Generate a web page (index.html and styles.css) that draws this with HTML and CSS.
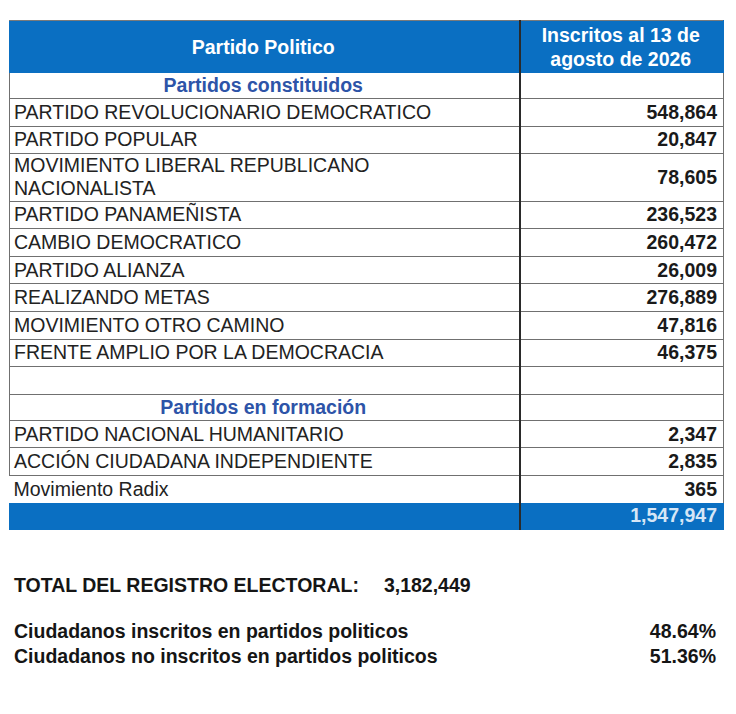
FILE: index.html
```html
<!DOCTYPE html>
<html lang="es">
<head>
<meta charset="utf-8">
<title>Inscritos en partidos políticos</title>
<link rel="stylesheet" href="styles.css">
</head>
<body>
<div class="wrap">
  <table class="reg">
    <colgroup><col class="c1"><col class="c2"></colgroup>
    <thead>
      <tr class="head">
        <th>Partido Politico</th>
        <th class="num-h">Inscritos al 13 de<br>agosto de 2026</th>
      </tr>
    </thead>
    <tbody>
      <tr class="sec"><td class="sec-t">Partidos constituidos</td><td class="num"></td></tr>
      <tr><td>PARTIDO REVOLUCIONARIO DEMOCRATICO</td><td class="num">548,864</td></tr>
      <tr><td>PARTIDO POPULAR</td><td class="num">20,847</td></tr>
      <tr class="dbl"><td>MOVIMIENTO LIBERAL REPUBLICANO<br>NACIONALISTA</td><td class="num">78,605</td></tr>
      <tr><td>PARTIDO PANAMEÑISTA</td><td class="num">236,523</td></tr>
      <tr><td>CAMBIO DEMOCRATICO</td><td class="num">260,472</td></tr>
      <tr><td>PARTIDO ALIANZA</td><td class="num">26,009</td></tr>
      <tr><td>REALIZANDO METAS</td><td class="num">276,889</td></tr>
      <tr><td>MOVIMIENTO OTRO CAMINO</td><td class="num">47,816</td></tr>
      <tr><td>FRENTE AMPLIO POR LA DEMOCRACIA</td><td class="num">46,375</td></tr>
      <tr><td></td><td class="num"></td></tr>
      <tr class="sec"><td class="sec-t">Partidos en formación</td><td class="num"></td></tr>
      <tr><td>PARTIDO NACIONAL HUMANITARIO</td><td class="num">2,347</td></tr>
      <tr><td>ACCIÓN CIUDADANA INDEPENDIENTE</td><td class="num">2,835</td></tr>
      <tr class="radix"><td>Movimiento Radix</td><td class="num">365</td></tr>
      <tr class="tot"><td></td><td class="num">1,547,947</td></tr>
    </tbody>
  </table>

  <div class="summary">
    <div class="grand"><span>TOTAL DEL REGISTRO ELECTORAL:</span><span class="grand-n">3,182,449</span></div>
    <div class="pct-list">
      <div class="pct"><span>Ciudadanos inscritos en partidos politicos</span><span>48.64%</span></div>
      <div class="pct"><span>Ciudadanos no inscritos en partidos politicos</span><span>51.36%</span></div>
    </div>
  </div>
</div>
</body>
</html>
```

FILE: styles.css
```css
html, body {
  margin: 0;
  padding: 0;
  background: #ffffff;
}

.wrap {
  padding: 20px 0 0 9px;
  width: 714px;
  font-family: "Liberation Sans", Arial, sans-serif;
  font-size: 19.5px;
  color: #222222;
}

.reg {
  border-collapse: collapse;
  table-layout: fixed;
  width: 714px;
}

.c1 { width: 510px; }
.c2 { width: 204px; }

.reg th,
.reg td {
  padding: 0 6px 0 4px;
  height: 26.6px;
  line-height: 23px;
  border: 1px solid #707070;
  white-space: nowrap;
  vertical-align: middle;
}

.head th {
  background: #0a6fc2;
  color: #ffffff;
  font-weight: bold;
  height: 51px;
  line-height: 24px;
  text-align: center;
  border-top: 1px solid #7a7a7a;
  border-left-color: #0a6fc2;
  border-right-color: #0a6fc2;
  border-bottom-color: #0a6fc2;
}

.head th.num-h {
  border-left: 2px solid #2a2a2a;
}

.reg td.num {
  text-align: right;
  font-weight: bold;
  border-left: 2px solid #2a2a2a;
  color: #1a1a1a;
}

.sec-t {
  text-align: center;
  font-weight: bold;
  color: #2d54a8;
}

.reg .sec td { height: 25px; }

.reg .dbl td { height: 46.5px; }

.radix td { border-bottom: none; }
.radix td:first-child { border-left: none; }

.tot td {
  background: #0a6fc2;
  border-top: none;
  border-bottom: 1px solid #0a6fc2;
  border-left-color: #0a6fc2;
  border-right-color: #0a6fc2;
}

.reg .tot td.num {
  color: #d6e6f6;
  border-left: 2px solid #2a2a2a;
}

.summary {
  padding: 44px 0 0 5px;
  width: 702px;
  font-weight: bold;
  color: #151515;
  line-height: 23px;
}

.grand {
  display: flex;
}

.grand-n {
  margin-left: 25px;
}

.pct-list {
  margin-top: 23px;
  display: flex;
  flex-direction: column;
  gap: 2px;
}

.pct {
  display: flex;
  justify-content: space-between;
}
```
